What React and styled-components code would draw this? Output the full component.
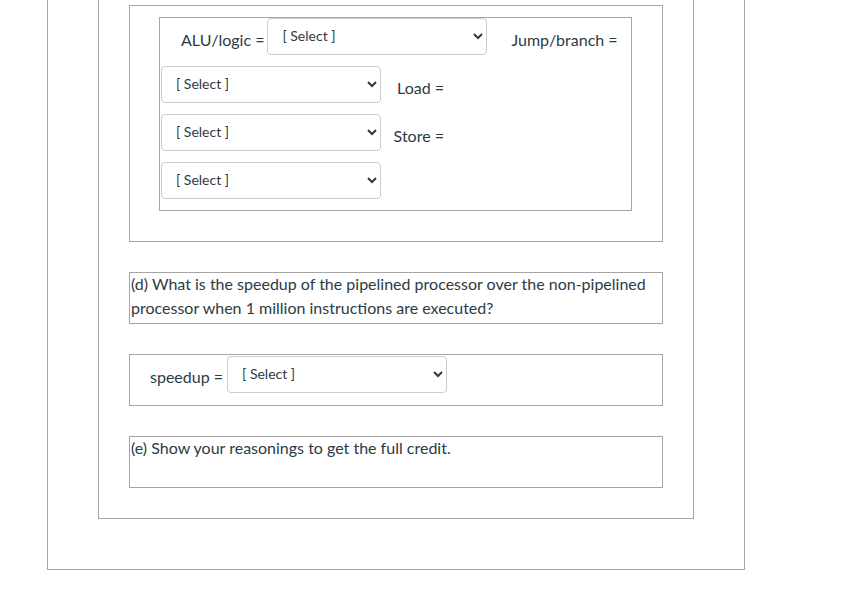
import styled, { createGlobalStyle } from "styled-components";

const GlobalStyle = createGlobalStyle`
  html, body {
    margin: 0;
    padding: 0;
    background: #ffffff;
  }
  body {
    font-family: Lato, "Open Sans", sans-serif;
    color: #2d3b45;
    overflow: hidden;
  }
  * {
    box-sizing: border-box;
  }
`;

const Page = styled.div`
  width: 850px;
  height: 594px;
  overflow: hidden;
`;

const OuterBox = styled.div`
  margin: -77px 0 0 47px;
  width: 698px;
  border: 1px solid #a5a5a5;
  padding: 50px;
`;

const QuestionBox = styled.div`
  border: 1px solid #a5a5a5;
  padding: 30px;
  display: flex;
  flex-direction: column;
  gap: 30px;
`;

const Frame = styled.div`
  border: 1px solid #a5a5a5;
  min-height: 52px;
  padding: ${(p) => p.$padding || "0"};
  font-size: 16px;
  line-height: 24px;
`;

const Text = styled.p`
  margin: -1px 0 0 0;
`;

const Table = styled.div`
  width: 473px;
  border: 1px solid #a5a5a5;
  padding: 0 1px 11px 1px;
  display: flex;
  flex-direction: column;
  gap: 11px;
`;

const Row = styled.div`
  display: flex;
  align-items: flex-start;
`;

const Label = styled.span`
  font-size: 16px;
  line-height: 24px;
  padding-top: ${(p) => p.$top || 10}px;
  white-space: nowrap;
  width: ${(p) => (p.$width ? `${p.$width}px` : "auto")};
  text-align: ${(p) => p.$align || "left"};
  margin-left: ${(p) => p.$left || 0}px;
  margin-right: ${(p) => p.$right || 0}px;
`;

const Select = styled.select`
  width: 220px;
  height: 37px;
  border: 1px solid #c7cdd1;
  border-radius: 4px;
  background: #ffffff;
  color: #2d3b45;
  font-family: Lato, "Open Sans", sans-serif;
  font-size: 14px;
  padding: 0 8px 2px 10px;
`;

function Dropdown(props) {
  return (
    <Select {...props} defaultValue="">
      <option value="">[ Select ]</option>
    </Select>
  );
}

function App() {
  return (
    <Page>
      <GlobalStyle />
      <OuterBox>
        <QuestionBox>
          <Frame $padding="11px 31px 30px 29px">
            <Table>
              <Row>
                <Label $left={20} $right={3}>
                  ALU/logic =
                </Label>
                <Dropdown />
                <Label $left={24}>Jump/branch =</Label>
              </Row>
              <Row>
                <Dropdown />
                <Label $width={63} $align="right">
                  Load =
                </Label>
              </Row>
              <Row>
                <Dropdown />
                <Label $width={63} $align="right">
                  Store =
                </Label>
              </Row>
              <Row>
                <Dropdown />
              </Row>
            </Table>
          </Frame>

          <Frame $padding="0 16px 0 1px">
            <Text>
              (d) What is the speedup of the pipelined processor over the
              non-pipelined processor when 1 million instructions are executed?
            </Text>
          </Frame>

          <Frame $padding="1px 0 0 0">
            <Row>
              <Label $left={20} $right={4} $top={9}>
                speedup =
              </Label>
              <Dropdown />
            </Row>
          </Frame>

          <Frame $padding="0 0 0 1px">
            <Text>(e) Show your reasonings to get the full credit.</Text>
          </Frame>
        </QuestionBox>
      </OuterBox>
    </Page>
  );
}

export default App;
